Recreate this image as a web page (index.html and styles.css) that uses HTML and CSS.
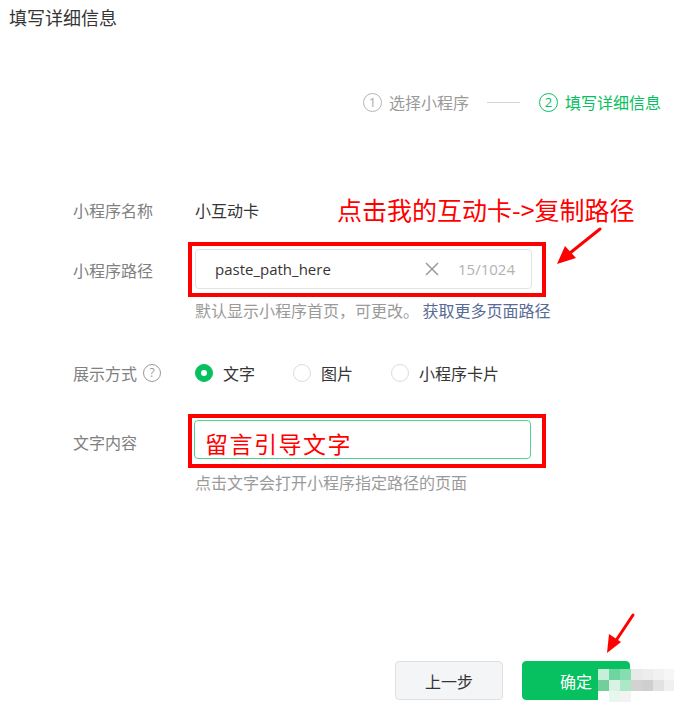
FILE: index.html
```html
<!DOCTYPE html>
<html lang="zh-CN">
<head>
<meta charset="utf-8">
<title>填写详细信息</title>
<link rel="stylesheet" href="styles.css">
</head>
<body>
<div class="page">
  <div class="title">填写详细信息</div>

  <div class="steps">
    <span class="step-num">1</span>
    <span class="step-text">选择小程序</span>
    <span class="step-line"></span>
    <span class="step-num active">2</span>
    <span class="step-text active">填写详细信息</span>
  </div>

  <div class="form">
    <div class="row row-name">
      <div class="label">小程序名称</div>
      <div class="value">小互动卡</div>
    </div>

    <div class="row row-path">
      <div class="label">小程序路径</div>
      <div class="mark mark-path">
        <div class="input">
          <span class="input-text">paste_path_here</span>
          <svg class="clear" width="14" height="14" viewBox="0 0 14 14"><path d="M1 1L13 13M13 1L1 13" stroke="#9a9a9a" stroke-width="1.5" fill="none"/></svg>
          <span class="counter">15/1024</span>
        </div>
      </div>
    </div>
    <div class="hint hint-path">默认显示小程序首页，可更改。 <span class="link">获取更多页面路径</span></div>

    <div class="row row-mode">
      <div class="label">展示方式 <span class="help">?</span></div>
      <div class="radios">
        <span class="radio checked"></span><span class="radio-text">文字</span>
        <span class="radio"></span><span class="radio-text">图片</span>
        <span class="radio"></span><span class="radio-text">小程序卡片</span>
      </div>
    </div>

    <div class="row row-content">
      <div class="label label-top">文字内容</div>
      <div class="mark mark-content">
        <div class="input input-green">留言引导文字</div>
      </div>
    </div>
    <div class="hint hint-content">点击文字会打开小程序指定路径的页面</div>
  </div>

  <div class="actions">
    <button class="btn btn-default">上一步</button>
    <button class="btn btn-primary">确定</button>
  </div>

  <div class="annotation">点击我的互动卡-&gt;复制路径</div>

  <svg class="arrow arrow-1" width="60" height="50" viewBox="0 0 60 50">
    <path d="M44 2L14 26" stroke="#ff0000" stroke-width="3" fill="none" stroke-linecap="round"/>
    <path d="M1 37L9 19L20 31Z" fill="#ff0000"/>
  </svg>
  <svg class="arrow arrow-2" width="40" height="50" viewBox="0 0 40 50">
    <path d="M32 3L14 30" stroke="#ff0000" stroke-width="3" fill="none" stroke-linecap="round"/>
    <path d="M6 41L8 22L20 30Z" fill="#ff0000"/>
  </svg>

  <div class="mosaic">
    <span style="background:#c6eed9"></span><span style="background:#6fd5a0"></span><span style="background:#86ddb0"></span><span style="background:#e9e9e9"></span><span style="background:#ececec"></span><span style="background:#f1f1f1"></span><span style="background:#f6f6f6"></span>
    <span style="background:#72cf9c"></span><span style="background:#d8f3e5"></span><span style="background:#ace7c8"></span><span style="background:#d2d2d2"></span><span style="background:#cfcfcf"></span><span style="background:#e2e2e2"></span><span style="background:#f0f0f0"></span>
    <span style="background:#ffffff"></span><span style="background:#e6f7ee"></span><span style="background:#f3f3f3"></span><span style="background:#ffffff"></span><span style="background:#ffffff"></span><span style="background:#ffffff"></span><span style="background:#ffffff"></span>
  </div>
</div>
</body>
</html>
```

FILE: styles.css
```css
* { box-sizing: border-box; }
html, body { margin: 0; padding: 0; background: #ffffff; }
body {
  font-family: "Noto Sans CJK SC", "Noto Sans", sans-serif;
  color: #353535;
}
.page {
  position: relative;
  width: 674px;
  height: 702px;
  overflow: hidden;
}
.title {
  padding: 5px 0 0 9px;
  font-size: 18px;
  line-height: 24px;
  height: 30px;
  color: #353535;
}
.steps {
  margin-top: 60px;
  height: 24px;
  display: flex;
  align-items: center;
  justify-content: flex-end;
  padding-right: 13px;
  font-size: 16px;
  color: #9a9a9a;
}
.step-num {
  width: 19px;
  height: 19px;
  border: 1.5px solid #b5b5b5;
  border-radius: 50%;
  display: flex;
  align-items: center;
  justify-content: center;
  font-size: 13px;
  font-family: "Open Sans", sans-serif;
  color: #aaaaaa;
  margin-right: 7px;
}
.step-num.active { border-color: #07c160; color: #07c160; }
.step-text { line-height: 24px; }
.step-text.active { color: #07c160; }
.step-line {
  width: 33px;
  height: 1px;
  background: #d5d5d5;
  margin: 0 19px 0 18px;
}
.form {
  margin-left: 73px;
  margin-top: 80px;
}
.row {
  display: flex;
  align-items: center;
}
.label {
  width: 122px;
  flex: none;
  font-size: 16px;
  color: #808080;
  line-height: 20px;
  display: flex;
  align-items: center;
}
.value { font-size: 16px; color: #353535; }
.row-name { height: 32px; }
.row-path { margin-top: 16px; }
.mark {
  border: 4px solid #ff0000;
  margin-left: -7px;
}
.mark-path { padding: 3px 10px 4px 3px; }
.input {
  width: 337px;
  height: 40px;
  border: 1px solid #e3e3e3;
  border-radius: 4px;
  display: flex;
  align-items: center;
  padding-left: 19px;
  padding-right: 16px;
  background: #fff;
}
.input-text {
  flex: 1;
  font-family: "Open Sans", sans-serif;
  font-size: 15px;
  color: #353535;
}
.clear { margin-right: 19px; }
.counter {
  font-family: "Open Sans", sans-serif;
  font-size: 15px;
  color: #b2b2b2;
}
.hint {
  margin-left: 122px;
  font-size: 16px;
  line-height: 20px;
  color: #9a9a9a;
}
.hint-path { margin-top: 3px; }
.link { color: #576b95; }
.row-mode { margin-top: 37px; height: 32px; }
.help {
  width: 18px;
  height: 18px;
  border: 1.5px solid #9a9a9a;
  border-radius: 50%;
  display: inline-flex;
  align-items: center;
  justify-content: center;
  font-size: 12px;
  font-family: "Open Sans", sans-serif;
  color: #9a9a9a;
  margin-left: 6px;
}
.radios { display: flex; align-items: center; font-size: 16px; color: #353535; }
.radio {
  width: 18px;
  height: 18px;
  border-radius: 50%;
  border: 1px solid #dcdcdc;
  margin-right: 10px;
  position: relative;
}
.radio.checked { background: #07c160; border-color: #07c160; }
.radio.checked::after {
  content: "";
  position: absolute;
  left: 5px;
  top: 5px;
  width: 6px;
  height: 6px;
  border-radius: 50%;
  background: #fff;
}
.radio-text { margin-right: 38px; }
.row-content { margin-top: 25px; align-items: flex-start; }
.label-top { padding-top: 18px; }
.mark-content { padding: 2px 11px 5px 2px; }
.input-green {
  height: 39px;
  border-color: #4fd38d;
  padding-left: 10px;
  font-size: 23px;
  letter-spacing: 1.5px;
  color: #ff0000;
  padding-top: 6px;
}
.hint-content { margin-top: 4px; }
.actions {
  margin-top: 169px;
  display: flex;
  justify-content: flex-end;
  gap: 19px;
  padding-right: 44px;
}
.btn {
  width: 108px;
  height: 39px;
  border-radius: 4px;
  font-family: "Noto Sans CJK SC", sans-serif;
  font-size: 16px;
  padding: 0;
}
.btn-default {
  background: #f4f5f7;
  border: 1px solid #dfe0e2;
  color: #353535;
}
.btn-primary {
  background: #07c160;
  border: 1px solid #07c160;
  color: #ffffff;
}
.annotation {
  position: absolute;
  left: 337px;
  top: 193px;
  font-size: 25px;
  line-height: 32px;
  color: #ff0000;
  white-space: nowrap;
}
.arrow { position: absolute; }
.arrow-1 { left: 556px; top: 227px; }
.arrow-2 { left: 601px; top: 612px; }
.mosaic {
  position: absolute;
  left: 598px;
  top: 669px;
  display: grid;
  grid-template-columns: repeat(7, 11px);
  grid-template-rows: repeat(3, 11px);
}
.mosaic span { display: block; }
```
